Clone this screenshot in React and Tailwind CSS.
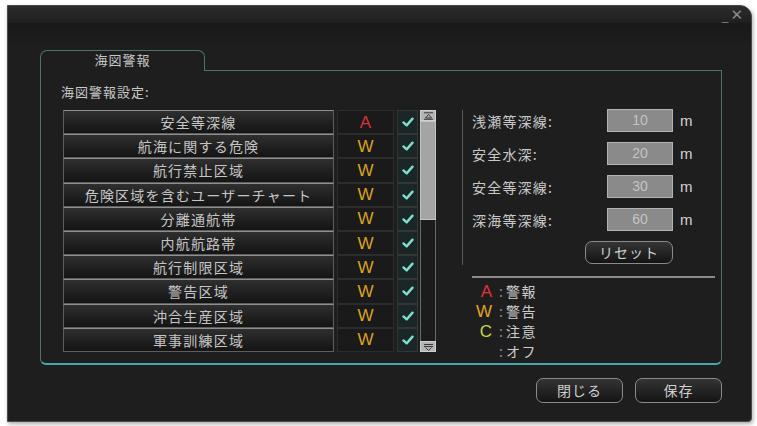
import React from 'react';

const rows = [
  { name: '安全等深線', level: 'A' },
  { name: '航海に関する危険', level: 'W' },
  { name: '航行禁止区域', level: 'W' },
  { name: '危険区域を含むユーザーチャート', level: 'W' },
  { name: '分離通航帯', level: 'W' },
  { name: '内航航路帯', level: 'W' },
  { name: '航行制限区域', level: 'W' },
  { name: '警告区域', level: 'W' },
  { name: '沖合生産区域', level: 'W' },
  { name: '軍事訓練区域', level: 'W' },
];

const depths = [
  { label: '浅瀬等深線:', value: '10' },
  { label: '安全水深:', value: '20' },
  { label: '安全等深線:', value: '30' },
  { label: '深海等深線:', value: '60' },
];

const legend = [
  { letter: 'A', color: 'text-[#e0323c]', text: '警報' },
  { letter: 'W', color: 'text-[#e0a622]', text: '警告' },
  { letter: 'C', color: 'text-[#c8d84a]', text: '注意' },
  { letter: '', color: '', text: 'オフ' },
];

function Tick() {
  return (
    <svg width="12" height="10" viewBox="0 0 13 11">
      <path d="M1.5 6 L5 9.2 L11.5 1.8" fill="none" stroke="#7ee0d2" strokeWidth="2.6" strokeLinecap="round" strokeLinejoin="round" />
    </svg>
  );
}

function ScrollBtn({ down }) {
  return (
    <div className="h-[11px] w-full bg-[#b4b4b4] border border-[#d0d0d0] flex items-center justify-center">
      <svg width="11" height="8" viewBox="0 0 11 8">
        {down ? (
          <g fill="none" stroke="#3a3a3a" strokeWidth="1">
            <path d="M1 1.5 H10" />
            <path d="M1 3.5 H10" />
            <path d="M2.5 4.5 L5.5 7.5 L8.5 4.5" />
          </g>
        ) : (
          <g fill="none" stroke="#3a3a3a" strokeWidth="1">
            <path d="M1 0.8 H10" />
            <path d="M2.5 6 L5.5 2.5 L8.5 6 Z" />
            <path d="M1 7.3 H10" />
          </g>
        )}
      </svg>
    </div>
  );
}

function DarkButton({ children, className = '' }) {
  return (
    <div className={`flex items-center justify-center rounded-[7px] border border-[#8a8a8a] bg-gradient-to-b from-[#353535] to-[#141414] text-[#cfcfcf] text-[14px] tracking-[1px] ${className}`}>
      {children}
    </div>
  );
}

export default function App() {
  return (
    <div className="w-[757px] h-[426px] bg-white pt-[5px] pl-[7px] pb-[4px] flex font-['Noto_Sans_CJK_JP',sans-serif]">
      <div className="w-[745px] shrink-0 flex flex-col bg-[#1e1e1e] border border-[#4a4a4a] rounded-tr-[12px] rounded-br-[4px] shadow-[1px_2px_4px_rgba(0,0,0,0.35)]">
        {/* Title bar */}
        <div className="h-[17px] bg-gradient-to-b from-[#2c2c2c] to-[#1f1f1f] rounded-tr-[12px] flex items-start justify-end pr-[8px] gap-[2px] text-[#8c8c8c]">
          <span className="text-[12px] leading-[14px] mt-[3px]">_</span>
          <span className="text-[15px] leading-[15px] mt-[2px] font-['DejaVu_Sans',sans-serif]">✕</span>
        </div>
        <div className="h-[27px] bg-gradient-to-b from-[#191919] to-[#1e1e1e]" />

        {/* Panel */}
        <div className="ml-[32px] mr-[29px] flex flex-col">
          <div className="flex h-[21px]">
            <div className="w-[165px] border-t border-l border-r border-[#4d7466] rounded-t-[7px] flex items-center justify-center text-[#c6c6c6] text-[13px] tracking-[1px] pb-[2px]">
              海図警報
            </div>
            <div className="flex-1 border-b border-[#4d7466]" />
          </div>
          <div className="h-[294px] border-l border-r border-b border-[#4d7466] border-b-[#48a6a6] border-b-2 rounded-b-[6px] pt-[13px] pl-[20px] pr-[6px] flex flex-col">
            <div className="h-[16px] leading-[16px] text-[13px] text-[#c9c9c9] tracking-[1px]">海図警報設定:</div>
            <div className="mt-[10px] flex items-start">
              {/* Table */}
              <div className="ml-[2px] flex gap-[2px] shrink-0">
                <div className="flex flex-col w-[355px]">
                  {rows.map((r) => (
                    <div key={r.name} className="h-[24.2px] flex">
                      <div className="w-[271px] border border-[#5e5e5e] border-t-[#8e8e8e] bg-gradient-to-b from-[#2f2f2f] to-[#141414] flex items-center justify-center text-[#c6c6c6] text-[14px] tracking-[1.2px] leading-none">
                        {r.name}
                      </div>
                      <div className="ml-[3px] w-[57px] bg-[#1a1a1a] border border-[#2c2c2c] flex items-center justify-center">
                        <span className={`font-['Liberation_Sans',sans-serif] text-[17px] leading-none ${r.level === 'A' ? 'text-[#d8323c]' : 'text-[#d9a325]'}`}>
                          {r.level}
                        </span>
                      </div>
                      <div className="ml-[3px] w-[21px] bg-[#1b2727] border border-[#353535] flex items-center justify-center">
                        <Tick />
                      </div>
                    </div>
                  ))}
                </div>
                <div className="w-[16px] h-[242px] flex flex-col">
                  <ScrollBtn />
                  <div className="h-[99px] bg-[#a4a4a4] border border-[#c4c4c4]" />
                  <div className="flex-1 border-l border-r border-[#6a6a6a] bg-[#1c1c1c]" />
                  <ScrollBtn down />
                </div>
              </div>

              {/* Right column */}
              <div className="ml-[26px] flex-1 min-w-0 flex flex-col">
                <div className="border-l border-[#5a5a5a] pl-[9px] h-[155px] flex flex-col">
                  <div className="flex flex-col gap-[10px] -mt-[1px]">
                    {depths.map((d) => (
                      <div key={d.label} className="h-[23px] flex items-center">
                        <div className="w-[135px] text-[14px] tracking-[1.2px] text-[#c9c9c9] leading-none">{d.label}</div>
                        <div className="w-[66px] h-[23px] bg-[#8a8a8a] border border-[#b3b3b3] flex items-center justify-center text-[#c4c4c4] text-[14px] font-['Liberation_Sans',sans-serif]">
                          {d.value}
                        </div>
                        <div className="ml-[7px] text-[15px] text-[#d2d2d2] font-['Liberation_Sans',sans-serif] leading-none">m</div>
                      </div>
                    ))}
                  </div>
                  <div className="w-[201px] flex justify-end mt-[10px]">
                    <DarkButton className="w-[88px] h-[23px]">リセット</DarkButton>
                  </div>
                </div>
                <div className="mt-[11px] ml-[10px] h-[2px] bg-[#8a8a8a]" />
                <div className="mt-[3px] ml-[10px] flex flex-col">
                  {legend.map((l) => (
                    <div key={l.text} className="h-[20px] flex items-center">
                      <div className={`w-[20px] text-right font-['Liberation_Sans',sans-serif] text-[17px] leading-none ${l.color}`}>{l.letter}</div>
                      <div className="ml-[7px] text-[14px] text-[#8a8a8a] leading-none">:</div>
                      <div className="ml-[3px] text-[14px] tracking-[1.5px] text-[#cdcdcd] leading-none">{l.text}</div>
                    </div>
                  ))}
                </div>
              </div>
            </div>
          </div>
        </div>

        {/* Footer buttons */}
        <div className="mt-[13px] mr-[29px] flex justify-end gap-[12px]">
          <DarkButton className="w-[87px] h-[25px]">閉じる</DarkButton>
          <DarkButton className="w-[87px] h-[25px]">保存</DarkButton>
        </div>
      </div>
    </div>
  );
}
